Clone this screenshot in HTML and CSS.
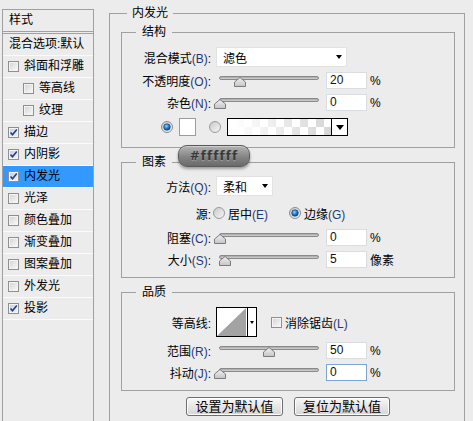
FILE: index.html
```html
<!DOCTYPE html>
<html lang="zh-CN">

<head>
    <meta charset="UTF-8">
    <meta name="viewport" content="width=device-width, initial-scale=1.0">
    <title>图层样式 - 内发光</title>
    <link rel="stylesheet" href="styles.css">
</head>

<body>
    <svg class="defs" aria-hidden="true">
        <defs>
            <linearGradient id="thumbFill" x1="0" y1="0" x2="0" y2="1">
                <stop offset="0" stop-color="#f2f2f2" />
                <stop offset="1" stop-color="#c4c4c4" />
            </linearGradient>
            <linearGradient id="radioFill" x1="0" y1="0" x2="1" y2="1">
                <stop offset="0" stop-color="#c8c8c8" />
                <stop offset="1" stop-color="#f8f8f8" />
            </linearGradient>
            <radialGradient id="dotFill" cx="0.4" cy="0.35" r="0.7">
                <stop offset="0" stop-color="#8fd2ff" />
                <stop offset="0.6" stop-color="#1475c8" />
                <stop offset="1" stop-color="#0a3f78" />
            </radialGradient>
        </defs>
    </svg>

    <div class="dialog">
        <!-- Style list -->
        <div class="styles-panel">
            <div class="panel-head">样式</div>
            <ul class="style-list">
                <li class="plain">混合选项:默认</li>
                <li><span class="check"></span>斜面和浮雕</li>
                <li class="sub"><span class="check"></span>等高线</li>
                <li class="sub"><span class="check"></span>纹理</li>
                <li><span class="check on"><svg width="9" height="9" viewBox="0 0 9 9"><path d="M1.5 4.5L3.5 6.8L7.8 1.5" fill="none" stroke="#253c92" stroke-width="1.6" /></svg></span>描边</li>
                <li><span class="check on"><svg width="9" height="9" viewBox="0 0 9 9"><path d="M1.5 4.5L3.5 6.8L7.8 1.5" fill="none" stroke="#253c92" stroke-width="1.6" /></svg></span>内阴影</li>
                <li class="active"><span class="check on"><svg width="9" height="9" viewBox="0 0 9 9"><path d="M1.5 4.5L3.5 6.8L7.8 1.5" fill="none" stroke="#253c92" stroke-width="1.6" /></svg></span>内发光</li>
                <li><span class="check"></span>光泽</li>
                <li><span class="check"></span>颜色叠加</li>
                <li><span class="check"></span>渐变叠加</li>
                <li><span class="check"></span>图案叠加</li>
                <li><span class="check"></span>外发光</li>
                <li><span class="check on"><svg width="9" height="9" viewBox="0 0 9 9"><path d="M1.5 4.5L3.5 6.8L7.8 1.5" fill="none" stroke="#253c92" stroke-width="1.6" /></svg></span>投影</li>
            </ul>
        </div>

        <!-- Inner glow settings -->
        <div class="settings">
            <fieldset class="outer">
                <legend>内发光</legend>

                <fieldset class="group structure">
                    <legend>结构</legend>
                    <div class="row select-row">
                        <span class="lbl">混合模式<span class="key">(B)</span>:</span>
                        <div class="select blend">滤色<span class="arrow"></span></div>
                    </div>
                    <div class="row">
                        <span class="lbl">不透明度<span class="key">(O)</span>:</span>
                        <div class="slider"><div class="track"></div><svg class="thumb" style="left:15px" width="12" height="10" viewBox="0 0 12 10"><path d="M0.5 9.5V5L6 0.5L11.5 5V9.5Z" fill="url(#thumbFill)" stroke="#7b7b7b" /></svg></div>
                        <div class="num">20</div><span class="unit">%</span>
                    </div>
                    <div class="row">
                        <span class="lbl">杂色<span class="key">(N)</span>:</span>
                        <div class="slider"><div class="track"></div><svg class="thumb" style="left:-5px" width="12" height="10" viewBox="0 0 12 10"><path d="M0.5 9.5V5L6 0.5L11.5 5V9.5Z" fill="url(#thumbFill)" stroke="#7b7b7b" /></svg></div>
                        <div class="num">0</div><span class="unit">%</span>
                    </div>
                    <div class="row color-row">
                        <svg class="radio" width="12" height="12" viewBox="0 0 12 12"><circle cx="6" cy="6" r="5.5" fill="url(#radioFill)" stroke="#8a8a8a" /><circle cx="6" cy="6" r="3.3" fill="url(#dotFill)" stroke="#0c3b6e" stroke-width="0.6" /></svg>
                        <div class="swatch"></div>
                        <svg class="radio" width="12" height="12" viewBox="0 0 12 12"><circle cx="6" cy="6" r="5.5" fill="url(#radioFill)" stroke="#9a9a9a" /></svg>
                        <div class="gradient-pick">
                            <div class="gradient-fill"></div>
                            <div class="gradient-drop"><span class="arrow big"></span></div>
                        </div>
                    </div>
                </fieldset>

                <fieldset class="group elements">
                    <legend>图素</legend>
                    <div class="row select-row">
                        <span class="lbl">方法<span class="key">(Q)</span>:</span>
                        <div class="select method">柔和<span class="arrow"></span></div>
                    </div>
                    <div class="row src-row">
                        <span class="lbl src-lbl">源:</span>
                        <svg class="radio" width="12" height="12" viewBox="0 0 12 12"><circle cx="6" cy="6" r="5.5" fill="url(#radioFill)" stroke="#9a9a9a" /></svg>
                        <span class="opt">居中<span class="key">(E)</span></span>
                        <svg class="radio second" width="12" height="12" viewBox="0 0 12 12"><circle cx="6" cy="6" r="5.5" fill="url(#radioFill)" stroke="#8a8a8a" /><circle cx="6" cy="6" r="3.3" fill="url(#dotFill)" stroke="#0c3b6e" stroke-width="0.6" /></svg>
                        <span class="opt">边缘<span class="key">(G)</span></span>
                    </div>
                    <div class="row choke-row">
                        <span class="lbl">阻塞<span class="key">(C)</span>:</span>
                        <div class="slider"><div class="track"></div><svg class="thumb" style="left:-5px" width="12" height="10" viewBox="0 0 12 10"><path d="M0.5 9.5V5L6 0.5L11.5 5V9.5Z" fill="url(#thumbFill)" stroke="#7b7b7b" /></svg></div>
                        <div class="num">0</div><span class="unit">%</span>
                    </div>
                    <div class="row">
                        <span class="lbl">大小<span class="key">(S)</span>:</span>
                        <div class="slider"><div class="track"></div><svg class="thumb" style="left:0px" width="12" height="10" viewBox="0 0 12 10"><path d="M0.5 9.5V5L6 0.5L11.5 5V9.5Z" fill="url(#thumbFill)" stroke="#7b7b7b" /></svg></div>
                        <div class="num">5</div><span class="unit">像素</span>
                    </div>
                </fieldset>

                <fieldset class="group quality">
                    <legend>品质</legend>
                    <div class="row contour-row">
                        <span class="lbl">等高线:</span>
                        <div class="contour">
                            <div class="contour-preview"><svg width="29" height="28" viewBox="0 0 29 28"><polygon points="0,28 29,0 29,28" fill="#a3a3a3" /></svg></div>
                            <div class="contour-drop"><span class="arrow small"></span></div>
                        </div>
                        <span class="check aa"></span>
                        <span class="opt">消除锯齿<span class="key">(L)</span></span>
                    </div>
                    <div class="row">
                        <span class="lbl">范围<span class="key">(R)</span>:</span>
                        <div class="slider"><div class="track"></div><svg class="thumb" style="left:44px" width="12" height="10" viewBox="0 0 12 10"><path d="M0.5 9.5V5L6 0.5L11.5 5V9.5Z" fill="url(#thumbFill)" stroke="#7b7b7b" /></svg></div>
                        <div class="num">50</div><span class="unit">%</span>
                    </div>
                    <div class="row">
                        <span class="lbl">抖动<span class="key">(J)</span>:</span>
                        <div class="slider"><div class="track"></div><svg class="thumb" style="left:-5px" width="12" height="10" viewBox="0 0 12 10"><path d="M0.5 9.5V5L6 0.5L11.5 5V9.5Z" fill="url(#thumbFill)" stroke="#7b7b7b" /></svg></div>
                        <div class="num focus">0</div><span class="unit">%</span>
                    </div>
                </fieldset>

                <div class="buttons">
                    <button class="btn">设置为默认值</button>
                    <button class="btn second-btn">复位为默认值</button>
                </div>
            </fieldset>

            <!-- Colour tooltip -->
            <div class="tooltip">#ffffff</div>
        </div>
    </div>
</body>

</html>
```
FILE: styles.css
```css
body {
    margin: 0;
    background-color: #ececec;
    font-family: "Liberation Sans", "Noto Sans CJK SC", sans-serif;
    font-size: 12px;
    color: #000;
    overflow: hidden;
}

.defs {
    position: absolute;
    width: 0;
    height: 0;
}

.dialog {
    display: flex;
    height: 421px;
}

/* Style list */
.styles-panel {
    margin: 9px 0 0 2px;
    width: 92px;
    box-sizing: border-box;
    border: 1px solid #a0a0a0;
    border-bottom: none;
}

.panel-head {
    height: 21px;
    line-height: 21px;
    padding-left: 6px;
    border-bottom: 1px solid #a0a0a0;
}

.style-list {
    list-style-type: none;
    margin: 1px 0 0;
    padding: 0;
    border-top: 1px solid #a0a0a0;
}

.style-list li {
    height: 21px;
    line-height: 21px;
    border-bottom: 1px solid #fbfbfb;
    display: flex;
    align-items: center;
    padding-left: 5px;
    white-space: nowrap;
}

.style-list li.plain {
    padding-left: 6px;
}

.style-list li.sub {
    padding-left: 20px;
}

.style-list li.active {
    background-color: #3399ff;
}

.check {
    flex: none;
    width: 11px;
    height: 11px;
    box-sizing: border-box;
    border: 1px solid #8e8f8f;
    background: linear-gradient(135deg, #d2d2d2, #fbfbfb);
    box-shadow: inset 0 0 0 1px #f4f4f4;
    margin-right: 5px;
    display: flex;
    align-items: center;
    justify-content: center;
}

.check.on {
    background: linear-gradient(135deg, #c6cbe0, #f4f5fa);
}

/* Settings */
.settings {
    position: relative;
    margin-left: 15px;
    width: 356px;
}

fieldset {
    margin: 0;
    padding: 0;
    min-width: 0;
    border: 1px solid #a0a0a0;
}

legend {
    height: 14px;
    line-height: 14px;
    padding: 0 6px;
    margin-left: 14px;
}

.outer {
    margin-top: 6px;
    padding: 0 9px 5px 11px;
    border-bottom: none;
}

.outer > legend {
    padding: 0 5px;
    margin-left: 6px;
}

.group {
    margin-top: 7px;
}

.structure {
    margin-top: 5px;
    padding: 8px 0 11px;
}

.elements {
    padding: 7px 0 9px;
}

.quality {
    padding: 8px 0 9px;
}

.row {
    display: flex;
    align-items: center;
    height: 17px;
    margin-top: 5px;
    white-space: nowrap;
}

.select-row,
.contour-row {
    margin-top: 0;
}

.select-row {
    height: 20px;
}

.lbl {
    flex: none;
    width: 89px;
    margin-right: 5px;
    text-align: right;
}

.key {
    color: #1f3978;
}

.select {
    height: 20px;
    box-sizing: border-box;
    border: 1px solid #e2e2e2;
    background: #fff;
    padding: 0 4px 0 6px;
    display: flex;
    align-items: center;
    justify-content: space-between;
}

.select.blend {
    width: 131px;
}

.select.method {
    width: 57px;
}

.arrow {
    width: 0;
    height: 0;
    border-left: 3px solid transparent;
    border-right: 3px solid transparent;
    border-top: 4px solid #000;
}

.arrow.big {
    border-left-width: 4px;
    border-right-width: 4px;
    border-top-width: 5px;
}

.arrow.small {
    border-left-width: 2px;
    border-right-width: 2px;
    border-top-width: 3px;
}

.slider {
    position: relative;
    flex: none;
    width: 100px;
    height: 17px;
    margin-left: 3px;
    margin-right: 7px;
}

.track {
    margin-top: 4px;
    height: 4px;
    box-sizing: border-box;
    border: 1px solid #8a8a8a;
    border-radius: 2px;
    background: linear-gradient(#a5a5a5, #d4d4d4);
}

.thumb {
    position: absolute;
    top: 5px;
}

.num {
    flex: none;
    width: 41px;
    height: 17px;
    box-sizing: border-box;
    border: 1px solid #d9dde2;
    background: #fff;
    padding-left: 3px;
    line-height: 15px;
    color: #111;
}

.num.focus {
    border-color: #7ea6d2;
}

.unit {
    margin-left: 3px;
}

.color-row {
    height: 18px;
    margin-top: 7px;
    padding-left: 39px;
}

.radio {
    flex: none;
}

.swatch {
    width: 17px;
    height: 18px;
    box-sizing: border-box;
    border: 1px solid #9c9c9c;
    background: #fff;
    margin: 0 13px 0 6px;
}

.gradient-pick {
    margin-left: 6px;
    width: 121px;
    height: 18px;
    box-sizing: border-box;
    border: 1px solid #000;
    display: flex;
}

.gradient-fill {
    flex: 1;
    background-image:
        linear-gradient(90deg, #fff 5%, rgba(255, 255, 255, 0) 100%),
        repeating-conic-gradient(#d6d6d6 0 25%, #fff 0 50%);
    background-size: 100% 100%, 16px 16px;
}

.gradient-drop {
    width: 15px;
    border-left: 1px solid #000;
    background: #fff;
    display: flex;
    align-items: center;
    justify-content: center;
}

.src-row {
    height: 14px;
    margin-top: 10px;
}

.src-lbl {
    margin-right: 2px;
}

.opt {
    margin-left: 3px;
}

.radio.second {
    margin-left: 21px;
}

.choke-row {
    margin-top: 9px;
}

.contour-row {
    height: 30px;
}

.contour {
    flex: none;
    width: 41px;
    height: 30px;
    box-sizing: border-box;
    border: 1px solid #000;
    background: #fff;
    display: flex;
}

.contour-preview {
    width: 30px;
    border-right: 1px solid #000;
    display: flex;
    align-items: flex-end;
}

.contour-drop {
    flex: 1;
    display: flex;
    align-items: center;
    justify-content: center;
}

.check.aa {
    margin: 0 0 0 14px;
}

.buttons {
    display: flex;
    justify-content: center;
    gap: 11px;
    margin-top: 6px;
}

.btn {
    width: 97px;
    height: 19px;
    padding: 0;
    border: 1px solid #6f6f6f;
    border-radius: 3px;
    background: linear-gradient(#f8f8f8, #e6e6e6 50%, #d6d6d6);
    box-shadow: inset 0 0 0 1px #fdfdfd;
    font-family: "Liberation Sans", "Noto Sans CJK SC", sans-serif;
    font-size: 13px;
    line-height: 17px;
    color: #000;
}

.second-btn {
    width: 96px;
}

/* Colour tooltip */
.tooltip {
    position: absolute;
    left: 69px;
    top: 145px;
    width: 72px;
    height: 22px;
    box-sizing: border-box;
    border: 1px solid #5a5a5a;
    border-radius: 9px;
    background: linear-gradient(#b4b4b4, #848484 55%, #6a6a6a);
    box-shadow: 0 2px 3px rgba(0, 0, 0, 0.35), inset 0 1px 0 rgba(255, 255, 255, 0.35);
    text-align: center;
    line-height: 20px;
    font-family: "DejaVu Sans", sans-serif;
    font-weight: bold;
    font-size: 12px;
    letter-spacing: 1px;
    color: #3a3a3a;
    text-shadow: 0 1px 0 rgba(255, 255, 255, 0.25);
}
```
